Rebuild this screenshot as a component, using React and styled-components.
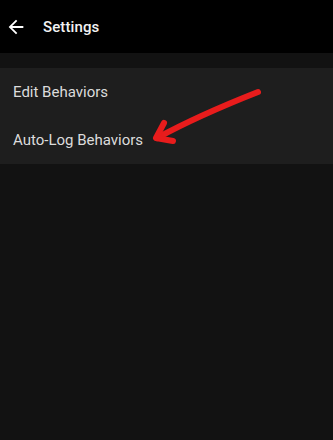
import React from "react";
import styled, { createGlobalStyle } from "styled-components";

const Global = createGlobalStyle`
  html, body { margin: 0; padding: 0; background: #121212; }
  body { font-family: Roboto, "Noto Sans", Arial, sans-serif; }
`;

const Screen = styled.div`
  width: 333px;
  height: 440px;
  background: #121212;
  display: flex;
  flex-direction: column;
  overflow: hidden;
`;

const Header = styled.header`
  height: 53px;
  background: #000;
  display: flex;
  align-items: center;
  padding: 0 0 0 5px;
  gap: 16px;
  flex-shrink: 0;
`;

const BackButton = styled.button`
  border: 0;
  background: none;
  padding: 0;
  width: 22px;
  height: 22px;
  display: flex;
  color: #fff;
  margin-top: 1px;
`;

const Title = styled.h1`
  margin: 0;
  font-size: 15px;
  font-weight: 500;
  color: #f2f2f2;
  letter-spacing: 0.1px;
`;

const List = styled.div`
  margin-top: 15px;
  background: #1e1e1e;
  position: relative;
  display: flex;
  flex-direction: column;
`;

const Row = styled.div`
  height: 48px;
  display: flex;
  align-items: center;
  padding-left: 13px;
  font-size: 15px;
  color: #dcdcdc;
`;

const Annotation = styled.svg`
  position: absolute;
  left: 0;
  top: 0;
  pointer-events: none;
`;

export default function App() {
  return (
    <>
      <Global />
      <Screen>
        <Header>
          <BackButton aria-label="Back">
            <svg width="22" height="22" viewBox="0 0 24 24" fill="currentColor">
              <path d="M20 11H7.83l5.59-5.59L12 4l-8 8 8 8 1.41-1.41L7.83 13H20v-2z" />
            </svg>
          </BackButton>
          <Title>Settings</Title>
        </Header>
        <List>
          <Row>Edit Behaviors</Row>
          <Row>Auto-Log Behaviors</Row>
          <Annotation width="333" height="97" viewBox="0 0 333 97">
            <g stroke="#e81c1c" strokeWidth="6" strokeLinecap="round" strokeLinejoin="round" fill="none">
              <path d="M258 24 C 225 37, 190 52, 157 70" />
              <path d="M164 55 L 156 70 L 173 73" />
            </g>
          </Annotation>
        </List>
      </Screen>
    </>
  );
}
